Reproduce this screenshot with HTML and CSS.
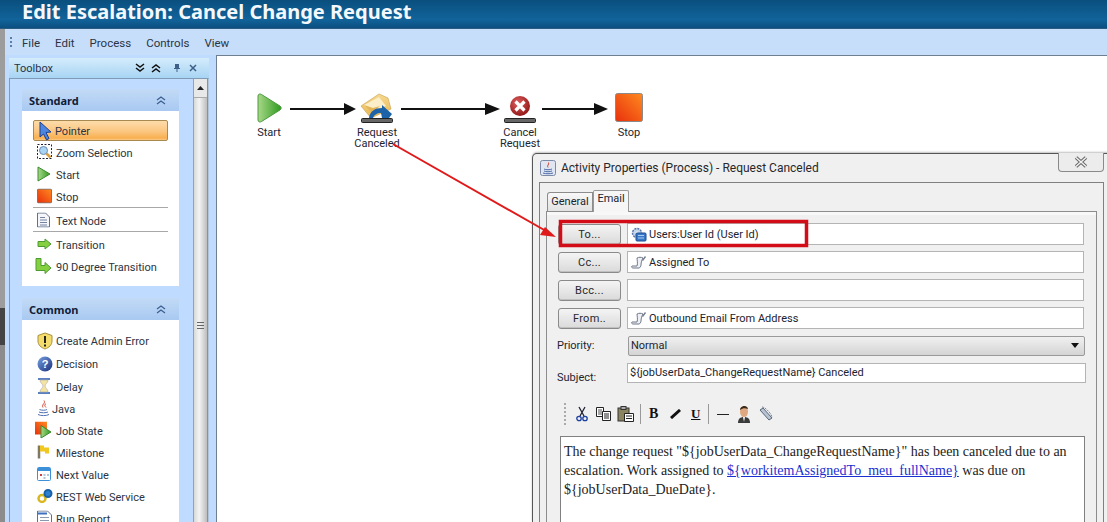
FILE: index.html
```html
<!DOCTYPE html>
<html lang="en">
<head>
<meta charset="utf-8">
<title>Edit Escalation</title>
<link rel="stylesheet" href="styles.css">
</head>
<body>
<svg class="defs" width="0" height="0" aria-hidden="true">
  <defs>
    <linearGradient id="gGreen" x1="0" y1="0" x2="1" y2="0"><stop offset="0" stop-color="#a8d888"/><stop offset="1" stop-color="#2f9a20"/></linearGradient>
    <linearGradient id="gRed" x1="0" y1="1" x2="1" y2="0"><stop offset="0" stop-color="#e8300c"/><stop offset="1" stop-color="#ff8a20"/></linearGradient>
    <radialGradient id="gBall" cx=".4" cy=".35" r=".7"><stop offset="0" stop-color="#e06060"/><stop offset="1" stop-color="#8e1414"/></radialGradient>
    <linearGradient id="gBlue" x1="0" y1="0" x2="1" y2="1"><stop offset="0" stop-color="#7aa0e0"/><stop offset="1" stop-color="#16307c"/></linearGradient>
    <linearGradient id="gEnv" x1="0" y1="0" x2="0" y2="1"><stop offset="0" stop-color="#f6d890"/><stop offset="1" stop-color="#e8b850"/></linearGradient>
  </defs>
</svg>
<header class="titlebar"><h1 class="title">Edit Escalation: Cancel Change Request</h1></header>
<div class="shell">
  <div class="strip"></div>
  <div class="workspace">
    <nav class="menubar">
      <span class="grip"></span>
      <span class="menu">File</span><span class="menu">Edit</span><span class="menu">Process</span><span class="menu">Controls</span><span class="menu">View</span>
    </nav>
    <div class="main">
      <aside class="toolbox">
        <div class="tb-head">
          <span class="tb-title">Toolbox</span>
          <span class="tb-ctl">
            <svg width="10" height="10" viewBox="0 0 10 10"><path d="M1 1l4 3 4-3M1 5l4 3 4-3" fill="none" stroke="#111" stroke-width="1.5"/></svg>
            <svg width="10" height="10" viewBox="0 0 10 10"><path d="M1 5l4-3 4 3M1 9l4-3 4 3" fill="none" stroke="#111" stroke-width="1.5"/></svg>
            <svg width="10" height="10" viewBox="0 0 10 10"><path d="M3 1h4v4h1v1H5.500v3h-1V6H2V5h1z" fill="#3e5f88"/></svg>
            <svg width="10" height="10" viewBox="0 0 10 10"><path d="M2 2l6 6M8 2l-6 6" stroke="#3e5f88" stroke-width="1.5"/></svg>
          </span>
        </div>
        <div class="tb-body">
          <div class="tb-cards">
            <section class="card card-standard">
              <div class="card-head"><span>Standard</span><svg width="10" height="10" viewBox="0 0 10 10"><path d="M1 5l4-3 4 3M1 9l4-3 4 3" fill="none" stroke="#3c5f90" stroke-width="1.200"/></svg></div>
              <div class="card-list">
                <div class="tool tool-on"><svg class="ic" width="18" height="20" viewBox="0 0 18 20"><path d="M3 1l11 10-5 .5 3 6-2.500 1.500-3-6L3 16z" fill="#4c86e0" stroke="#1c3f90"/></svg><span>Pointer</span></div>
                <div class="tool"><svg class="ic" width="16" height="16" viewBox="0 0 16 16"><rect x=".5" y=".5" width="14" height="14" fill="#fff" stroke="#223" stroke-dasharray="2 1.500"/><circle cx="6.500" cy="6.500" r="4" fill="#a8d4f4" stroke="#6a8ab0"/><path d="M9.500 9.500l4 4" stroke="#d8a040" stroke-width="2.500"/></svg><span>Zoom Selection</span></div>
                <div class="tool"><svg class="ic" width="14" height="16" viewBox="0 0 14 16"><path d="M1 1l12 7-12 7z" fill="url(#gGreen)" stroke="#3d8a30"/></svg><span>Start</span></div>
                <div class="tool"><svg class="ic" width="15" height="15" viewBox="0 0 15 15"><rect x=".5" y=".5" width="14" height="14" rx="1" fill="url(#gRed)" stroke="#777"/></svg><span>Stop</span></div>
                <div class="sep"></div>
                <div class="tool"><svg class="ic" width="13" height="15" viewBox="0 0 13 15"><path d="M.5.5h8l4 4v10H.5z" fill="#f4f6fa" stroke="#62708c"/><path d="M3 5h5M3 7.500h7M3 10h7M3 12.500h7" stroke="#7684a0"/></svg><span>Text Node</span></div>
                <div class="sep"></div>
                <div class="tool"><svg class="ic" width="15" height="12" viewBox="0 0 15 12"><path d="M1 3.500h7V1l6 5-6 5V8.500H1z" fill="#84d040" stroke="#4e9a30"/></svg><span>Transition</span></div>
                <div class="tool"><svg class="ic ic-wide" width="17" height="17" viewBox="0 0 17 17"><path d="M1 1h5v7h4V5l6 5.500L10 16v-3H1z" fill="#84d040" stroke="#4e9a30"/></svg><span>90 Degree Transition</span></div>
              </div>
            </section>
            <section class="card">
              <div class="card-head"><span>Common</span><svg width="10" height="10" viewBox="0 0 10 10"><path d="M1 5l4-3 4 3M1 9l4-3 4 3" fill="none" stroke="#3c5f90" stroke-width="1.200"/></svg></div>
              <div class="card-list card-list-common">
                <div class="tool tool-c tool-tall"><svg class="ic" width="16" height="18" viewBox="0 0 16 18"><path d="M8 1l7 2.500V9c0 4-3 6.500-7 8-4-1.500-7-4-7-8V3.500z" fill="#f4dc6c" stroke="#a89040"/><path d="M8 4v7M8 12.500v2" stroke="#222" stroke-width="2"/></svg><span>Create Admin Error</span></div>
                <div class="tool tool-c tool-tall"><svg class="ic" width="16" height="16" viewBox="0 0 16 16"><circle cx="8" cy="8" r="7.500" fill="url(#gBlue)"/><text x="8" y="12" class="ic-q">?</text></svg><span>Decision</span></div>
                <div class="tool tool-c"><svg class="ic" width="14" height="16" viewBox="0 0 14 16"><path d="M1 1h12M1 15h12" stroke="#5a80c0" stroke-width="2"/><path d="M3 2h8c0 3-3 4-3 6s3 3 3 6H3c0-3 3-4 3-6S3 5 3 2z" fill="#f4e4a0" stroke="#a8a8b0" stroke-width=".6"/></svg><span>Delay</span></div>
                <div class="tool tool-c tool-java"><svg class="ic" width="13" height="17" viewBox="0 0 13 17"><path d="M7 1c2 3-3 4-1 7M9 4c-2 1.500-1 3 0 4" fill="none" stroke="#d84030"/><path d="M2.500 10c2 1 6 1 7.500 0M2 12.500c2 1 7 1 9 0M1 15c3 1.500 8 1.500 11 0" fill="none" stroke="#5070b0"/></svg><span>Java</span></div>
                <div class="tool tool-c"><svg class="ic ic-wide" width="17" height="17" viewBox="0 0 17 17"><rect x="0" y="0" width="12" height="13" fill="url(#gRed)"/><path d="M6 4l10 6.500L6 16.500z" fill="url(#gGreen)" stroke="#3d8a30"/></svg><span>Job State</span></div>
                <div class="tool tool-c"><svg class="ic" width="13" height="15" viewBox="0 0 13 15"><path d="M2 1v13" stroke="#807860" stroke-width="2.500"/><path d="M3 1h4v2h5v6H8V7H3z" fill="#f0c820"/></svg><span>Milestone</span></div>
                <div class="tool tool-c"><svg class="ic" width="14" height="14" viewBox="0 0 14 14"><rect x=".5" y=".5" width="13" height="13" rx="1" fill="#fff" stroke="#3c90d8"/><rect x="1" y="1" width="12" height="3" fill="#3c90d8"/><path d="M3 7h2v2H3z" fill="#d04040"/><path d="M6.500 7h2v2h-2zM10 7h2v2h-2zM6.500 10h2v2h-2z" fill="#b0c4dc"/></svg><span>Next Value</span></div>
                <div class="tool tool-c"><svg class="ic" width="16" height="15" viewBox="0 0 16 15"><circle cx="5" cy="10" r="3.500" fill="none" stroke="#d8b820" stroke-width="2.500"/><circle cx="11" cy="5" r="3.500" fill="#2c80d0" stroke="#1860a8" stroke-width="2"/></svg><span>REST Web Service</span></div>
                <div class="tool tool-c"><svg class="ic" width="15" height="15" viewBox="0 0 15 15"><path d="M.5.5h10l4 4v10H.5z" fill="#fff" stroke="#62708c"/><path d="M1 2h9v2H1z" fill="#3c70c0"/><path d="M3 7h9M3 10h9" stroke="#8a98b0"/></svg><span>Run Report</span></div>
              </div>
            </section>
          </div>
          <div class="scrollbar">
            <div class="sb-up"><svg width="7" height="4" viewBox="0 0 7 4"><path d="M3.500 0L7 4H0z" fill="#222"/></svg></div>
            <div class="sb-thumb"><span class="sb-lines"></span></div>
          </div>
        </div>
      </aside>
      <div class="canvas">
        <svg class="wires" width="891" height="467" viewBox="0 0 891 467">
          <g stroke="#111" stroke-width="2" fill="#111">
            <path d="M73 53h56"/><path d="M127 47l12 6-12 6z" stroke="none"/>
            <path d="M184 53h90"/><path d="M268 47l15 6-15 6z" stroke="none"/>
            <path d="M325 53h58"/><path d="M377 47l14 6-14 6z" stroke="none"/>
          </g>
        </svg>
        <div class="node node-start">
          <svg width="26" height="30" viewBox="0 0 26 30"><path d="M2 3c0-2 2-2.500 3.500-1.500L24 13c1.500 1 1.500 3 0 4L5.500 28.500C4 29.500 2 29 2 27z" fill="url(#gGreen)" stroke="#4c9a40"/></svg>
          <span class="node-label">Start</span>
        </div>
        <div class="node node-request">
          <svg width="34" height="31" viewBox="0 0 34 31"><path d="M1 13L19 1l9 4 3 11-20 9z" fill="url(#gEnv)" stroke="#c89c48" stroke-width=".6"/><path d="M4 12l15-8 7 9-14 6z" fill="#fbeec8"/><path d="M4 12l9 3 7-2-8 7z" fill="#e4b458"/><path d="M9 25c1-7 6-10 13-10v-3l10 9-3 4h-7l-1-5c-4 0-7 2-8 5z" fill="#1c62a8"/><rect x="1.500" y="25.500" width="31" height="4" rx="1" fill="#666" stroke="#222"/></svg>
          <span class="node-label">Request<br>Canceled</span>
        </div>
        <div class="node node-cancel">
          <svg width="34" height="31" viewBox="0 0 34 31"><circle cx="17" cy="13" r="10" fill="url(#gBall)"/><path d="M12.500 8.500l9 9M21.500 8.500l-9 9" stroke="#fff" stroke-width="3.200"/><rect x="1.500" y="25.500" width="31" height="4" rx="1" fill="#666" stroke="#222"/></svg>
          <span class="node-label">Cancel<br>Request</span>
        </div>
        <div class="node node-stop">
          <svg width="29" height="30" viewBox="0 0 29 30"><rect x=".5" y=".5" width="27" height="28" rx="2" fill="url(#gRed)" stroke="#8a8a8a"/></svg>
          <span class="node-label">Stop</span>
        </div>
      </div>
    </div>
  </div>
</div>

<section class="dialog">
  <div class="dlg-title">
    <svg width="16" height="16" viewBox="0 0 16 16"><rect x=".5" y=".5" width="15" height="15" rx="2" fill="#dfe6f2" stroke="#7a8aa8"/><path d="M8.500 2.500c1 2-2 3-.5 5" fill="none" stroke="#d84030"/><path d="M4 9c2 1 6 1 8 0M4 11c2 1 6 1 8 0M3 13c3 1 7 1 10 0" fill="none" stroke="#4d6aa8"/></svg>
    <span>Activity Properties (Process) - Request Canceled</span>
    <button class="dlg-close" type="button" aria-label="Close"><svg width="14" height="12" viewBox="0 0 14 12"><path d="M2 1.500l10 9M12 1.500l-10 9" stroke="#666" stroke-width="3.500"/><path d="M2 1.500l10 9M12 1.500l-10 9" stroke="#f2f2f2" stroke-width="1.500"/></svg></button>
  </div>
  <div class="dlg-frame">
    <div class="tabs">
      <span class="tab">General</span><span class="tab tab-on">Email</span>
    </div>
    <div class="panel">
      <div class="rows">
        <div class="addr"><button class="btn" type="button">To...</button><div class="field"><svg width="16" height="15" viewBox="0 0 16 15"><circle cx="6" cy="6" r="4.500" fill="#c4d4ea" stroke="#5878a8" stroke-width="1.500" stroke-dasharray="2 1"/><circle cx="6" cy="6" r="1.500" fill="#fff"/><rect x="5" y="6" width="10" height="8" rx="1" fill="#3878c8" stroke="#1c4c90"/><path d="M7 8.500h6M7 11h6" stroke="#a8ccf0"/></svg><span>Users:User Id (User Id)</span></div></div>
        <div class="addr"><button class="btn" type="button">Cc...</button><div class="field"><svg width="16" height="15" viewBox="0 0 16 15"><path d="M6 3c2-1 4-1 6 0-1 2-2 4-2 7 0 1-1 3-2 3H2c-1 0-2-1-1-2h5c1-3 0-6 0-8z" fill="#eef0f6" stroke="#6e7888"/><path d="M11 5l3-4 1 1-3 4z" fill="#6e7888"/></svg><span>Assigned To</span></div></div>
        <div class="addr"><button class="btn" type="button">Bcc...</button><div class="field"></div></div>
        <div class="addr"><button class="btn" type="button">From..</button><div class="field"><svg width="16" height="15" viewBox="0 0 16 15"><path d="M6 3c2-1 4-1 6 0-1 2-2 4-2 7 0 1-1 3-2 3H2c-1 0-2-1-1-2h5c1-3 0-6 0-8z" fill="#eef0f6" stroke="#6e7888"/><path d="M11 5l3-4 1 1-3 4z" fill="#6e7888"/></svg><span>Outbound Email From Address</span></div></div>
      </div>
      <div class="line line-priority"><label class="lbl">Priority:</label><div class="select"><span>Normal</span><svg width="8" height="5" viewBox="0 0 8 5"><path d="M0 0h8L4 5z" fill="#111"/></svg></div></div>
      <div class="line line-subject"><label class="lbl lbl-low">Subject:</label><div class="input">${jobUserData_ChangeRequestName} Canceled</div></div>
      <div class="rte-bar">
        <span class="rte-grip"></span>
        <svg class="rte-ic rte-cut" width="12" height="16" viewBox="0 0 12 16"><path d="M3 1l5 9M9 1L4 10" stroke="#223" stroke-width="1.300"/><circle cx="3" cy="12.500" r="2.200" fill="none" stroke="#1c3fa0" stroke-width="1.300"/><circle cx="9" cy="12.500" r="2.200" fill="none" stroke="#1c3fa0" stroke-width="1.300"/></svg>
        <svg class="rte-ic rte-copy" width="16" height="14" viewBox="0 0 16 14"><path d="M.5.5h7v9h-7z" fill="#fff" stroke="#222"/><path d="M2 3h4M2 5h4M2 7h4" stroke="#222" stroke-width=".8"/><path d="M6.500 4.500h8v9h-8z" fill="#fff" stroke="#222"/><path d="M8 7h5M8 9h5M8 11h5" stroke="#222"/></svg>
        <svg class="rte-ic" width="17" height="16" viewBox="0 0 17 16"><rect x="1" y="2" width="11" height="13" fill="#8a8460" stroke="#333"/><rect x="4" y="0.500" width="5" height="3" fill="#aaa" stroke="#333"/><path d="M7.500 7.500h9v8h-9z" fill="#fff" stroke="#222"/><path d="M9 10h6M9 12.500h6" stroke="#222"/></svg>
        <span class="rte-sep"></span>
        <span class="fmt fmt-b">B</span><span class="fmt fmt-i"><svg width="12" height="10" viewBox="0 0 12 10"><path d="M1 9L10 1" stroke="#111" stroke-width="3"/></svg></span><span class="fmt fmt-u">U</span>
        <span class="rte-sep rte-sep-2"></span>
        <span class="rte-rule"></span>
        <svg class="rte-ic rte-face" width="14" height="18" viewBox="0 0 14 18"><path d="M1 18c0-4 2-6 6-6s6 2 6 6z" fill="#3a3a3a"/><path d="M6 12h2l-1 5z" fill="#fff"/><ellipse cx="7" cy="6.500" rx="4" ry="5.500" fill="#e0a880"/><path d="M3 5c0-4 7-6 8-1-3-1-5-1-8 1z" fill="#3a2818"/></svg>
        <svg class="rte-ic rte-clip" width="16" height="16" viewBox="0 0 16 16"><path d="M2 4l9 10 3-2L5 2z" fill="#b8c4d4" stroke="#5a6678"/><path d="M4 1c3 0 9 6 10 10" fill="none" stroke="#7a8494" stroke-dasharray="2 1"/></svg>
      </div>
      <div class="editor">The change request "${jobUserData_ChangeRequestName}" has been canceled due to an escalation. Work assigned to <a class="link">${workitemAssignedTo_meu_fullName}</a> was due on ${jobUserData_DueDate}.</div>
    </div>
  </div>
</section>

<svg class="annot" width="1107" height="522" viewBox="0 0 1107 522" aria-hidden="true">
  <path d="M393 144L546 231" stroke="#e01a1a" stroke-width="2"/>
  <path d="M556 237l-16-2 5-8z" fill="#e01a1a"/>
  <rect x="560.500" y="221.500" width="246" height="24" fill="none" stroke="#d20d18" stroke-width="3.500"/>
</svg>
</body>
</html>
```

FILE: styles.css
```css
* { box-sizing: border-box; }
html, body { margin: 0; height: 100%; }
body {
  width: 1107px; height: 522px; overflow: hidden; position: relative;
  display: flex; flex-direction: column;
  font-family: Roboto, "Liberation Sans", sans-serif; font-size: 11px; color: #1c2430;
  background: #bfdbff;
}
.defs { position: absolute; }
.titlebar { height: 29px; flex: none; background: linear-gradient(#0a4f7e, #11639a 70%, #0b4f80); border-bottom: 1px solid #2a5c80; padding-left: 22px; }
.title { margin: 0; font-size: 20px; line-height: 24px; font-weight: 700; color: #f4f8fc; font-family: "Noto Sans", "Open Sans", sans-serif; }
.shell { flex: 1; display: flex; min-height: 0; }
.strip { width: 5px; flex: none; background: linear-gradient(#9c9c9c 0, #9c9c9c 279px, #444 279px, #444 316px, #8c8c8c 316px); }
.workspace { flex: 1; display: flex; flex-direction: column; min-width: 0; }
.menubar { height: 26px; flex: none; display: flex; align-items: center; background: #c6defa; padding: 2px 0 0 5px; font-size: 11.500px; }
.grip { width: 2px; height: 12px; margin-right: 10px; background: repeating-linear-gradient(#5a7ea8 0 2px, transparent 2px 4px); }
.menu { margin-right: 15px; color: #2a3444; }
.main { flex: 1; display: flex; min-height: 0; }
.toolbox { width: 200px; flex: none; margin: 3px 0 0 4px; display: flex; flex-direction: column; }
.tb-head { height: 20px; flex: none; display: flex; align-items: center; justify-content: space-between; padding: 0 11px 0 5px; background: linear-gradient(#d4ecfb, #a8d4f4); }
.tb-title { color: #23344c; }
.tb-ctl { display: flex; gap: 6px; }
.tb-ctl svg:nth-child(2) { margin-right: 5px; }
.tb-body { flex: 1; display: flex; border: 1px solid #7f9bb6; border-bottom: 0; border-right: 1px solid #b0c4dc; background: #bfdbff; min-height: 0; overflow: hidden; }
.tb-cards { width: 183px; flex: none; padding: 10px 0 0 12px; }
.card { width: 157px; }
.card-standard { margin-bottom: 12px; }
.card-head { height: 22px; display: flex; align-items: center; justify-content: space-between; padding: 0 13px 0 7px; font: 700 11px "Noto Sans", sans-serif; color: #101c38; background: linear-gradient(#c2daf6, #a9c9f2); }
.card-list { background: #fff; padding: 9px 11px 9px; }
.card-list-common { padding-top: 9px; }
.tool { height: 22px; display: flex; align-items: center; position: relative; padding: 2px 0 0 23px; color: #2c3442; }
.tool-c { height: 22px; }
.tool-tall { height: 23px; }
.tool .ic { position: absolute; left: 4px; top: 50%; transform: translateY(-50%); }
.tool .ic-wide { left: 2px; }
.tool-java { padding-left: 19px; }
.tool-on { height: 21px; border: 1px solid #a88a50; border-radius: 2px; background: linear-gradient(#fddcaa, #fbc680 55%, #f8b050 90%, #fcc888); padding-left: 21px; }
.tool-on .ic { left: 3px; }
.sep { height: 1px; margin: 0 0 1px; background: #a8a8a8; }
.ic-q { font: 700 11px "Liberation Sans", sans-serif; fill: #fff; text-anchor: middle; }
.scrollbar { width: 15px; flex: none; background: #e8e8e8; border-left: 1px solid #a0a0a0; border-right: 1px solid #909090; display: flex; flex-direction: column; }
.sb-up { height: 18px; display: flex; align-items: center; justify-content: center; flex: none; }
.sb-thumb { flex: 1; display: flex; align-items: flex-start; justify-content: center; padding-top: 224px; background: linear-gradient(90deg, #d8d8d8, #f4f4f4 40%, #bdbdbd); border-top: 1px solid #aaa; }
.sb-lines { width: 7px; height: 7px; background: repeating-linear-gradient(#666 0 1px, transparent 1px 3px); }
.canvas { flex: 1; margin: 0 0 0 7px; background: #fff; border-left: 1px solid #6f7f90; border-top: 1px solid #6f7f90; position: relative; min-width: 0; }
.wires { position: absolute; left: 0; top: 0; }
.node { position: absolute; display: flex; flex-direction: column; align-items: center; width: 70px; }
.node-label { font-size: 11px; line-height: 11px; text-align: center; color: #1c2430; margin-top: 3px; }
.node-start { left: 17px; top: 37px; }
.node-start .node-label { margin-top: 4px; }
.node-request { left: 125px; top: 37px; }
.node-cancel { left: 268px; top: 37px; }
.node-stop { left: 377px; top: 37px; }
.node-stop .node-label { margin-top: 4px; }
.dialog { position: absolute; left: 532px; top: 153px; right: -12px; bottom: 0; background: #f0f0f0; border: 1px solid #555; border-bottom: 0; border-radius: 5px 5px 0 0; box-shadow: 0 -1px 2px rgba(0,0,0,.25); padding: 0 14px 0 6px; display: flex; flex-direction: column; color: #1c2430; font-size: 11px; }
.dlg-title { height: 28px; flex: none; display: flex; align-items: center; gap: 5px; padding-left: 1px; font-size: 12px; color: #26282c; position: relative; }
.dlg-close { position: absolute; right: 0; top: -1px; width: 46px; height: 19px; padding: 0; display: flex; align-items: center; justify-content: center; background: #ececec; border: 1px solid #8a8a8a; border-top: 0; border-radius: 0 0 4px 4px; }
.dlg-frame { flex: 1; border: 1px solid #808080; border-bottom: 0; padding: 6px 6px 0 6px; display: flex; flex-direction: column; min-height: 0; }
.tabs { height: 22px; flex: none; display: flex; align-items: flex-end; padding-left: 1px; }
.tab { height: 19px; width: 46px; background: linear-gradient(#f8f8f8, #e2e2e2); border: 1px solid #8c8c8c; border-bottom: 0; text-align: center; line-height: 17px; border-radius: 3px 0 0 0; font-size: 11px; }
.tab-on { width: 36px; height: 22px; background: #f6f6f6; border-radius: 2px 2px 0 0; line-height: 16px; position: relative; top: 1px; border-color: #999; }
.panel { flex: 1; border: 1px solid #8c8c8c; border-bottom: 0; padding: 11px 12px 0 11px; box-shadow: inset 0 3px 0 #f8f8f8; min-height: 0; }
.rows { display: flex; flex-direction: column; gap: 6px; }
.addr { display: flex; gap: 6px; height: 22px; align-items: center; }
.btn { width: 63px; height: 21px; flex: none; font: 11px Roboto, sans-serif; letter-spacing: .3px; color: #26282c; padding: 0; background: linear-gradient(#f4f4f4, #dadada); border: 1px solid #8a8a8a; border-radius: 3px; box-shadow: inset 0 -1px 0 #c0c0c0; }
.field { flex: 1; height: 22px; background: #fff; border: 1px solid #b4b4b4; display: flex; align-items: center; gap: 2px; padding-left: 3px; }
.line { display: flex; align-items: center; }
.line-priority { margin-top: 6px; height: 21px; }
.line-subject { margin-top: 6px; height: 21px; }
.lbl { width: 71px; flex: none; margin-left: -1px; }
.lbl-low { position: relative; top: 5px; }
.select { width: 457px; flex: none; height: 20px; display: flex; align-items: center; justify-content: space-between; padding: 0 5px 0 2px; background: linear-gradient(#f0f0f0, #d4d4d4); border: 1px solid #9a9a9a; border-radius: 2px; }
.input { width: 459px; flex: none; height: 20px; margin-left: -1px; background: #fff; border: 1px solid #b4b4b4; padding-left: 2px; line-height: 18px; font-size: 11px; }
.rte-bar { height: 28px; margin-top: 17px; display: flex; align-items: center; padding-left: 6px; }
.rte-grip { width: 2px; height: 22px; background: repeating-linear-gradient(#aaa 0 2px, transparent 2px 4px); margin-right: 10px; }
.rte-ic { margin-right: 6px; flex: none; }
.rte-cut { margin-right: 8px; }
.rte-copy { margin-right: 5px; }
.rte-sep { width: 1px; height: 20px; background: #999; margin: 0 8px 0 0; }
.rte-sep-2 { margin: 0 8px 0 2px; }
.fmt { width: 21px; font: 700 14px "Liberation Serif", serif; color: #111; display: flex; align-items: center; flex: none; }
.fmt-i { height: 14px; }
.fmt-u { text-decoration: underline; width: 15px; font-size: 13px; }
.rte-rule { width: 12px; height: 1px; background: #222; margin-right: 8px; }
.rte-face { margin-right: 7px; }
.editor { margin-top: 8px; margin-left: 2px; width: 525px; height: 120px; background: #fff; border: 1px solid #808080; padding: 5px 3px; font: 14px/19px "Liberation Serif", serif; color: #222; }
.link { color: #1a30d0; text-decoration: underline; }
.annot { position: absolute; left: 0; top: 0; pointer-events: none; }
```
